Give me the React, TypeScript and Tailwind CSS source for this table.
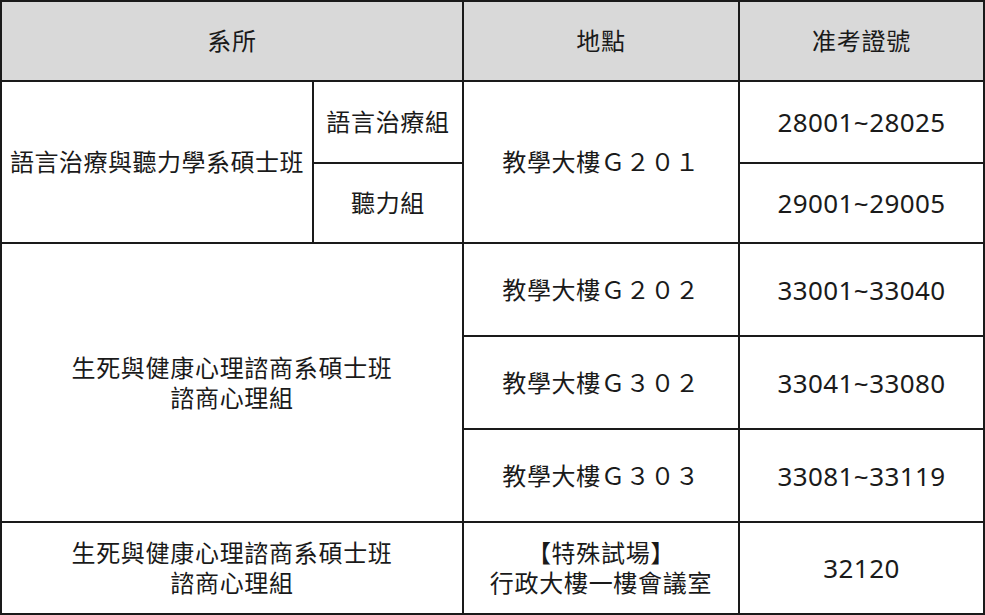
const cell = "border-2 border-[#1a1a1a] text-center align-middle";
const num = `${cell} text-[26px] tracking-[0.4px]`;

const rows = [
  { place: "教學大樓Ｇ２０２", no: "33001~33040" },
  { place: "教學大樓Ｇ３０２", no: "33041~33080" },
  { place: "教學大樓Ｇ３０３", no: "33081~33119" },
];

const App = () => {
  return (
    <div
      className="w-[985px] h-[615px] bg-[#8a8a8a] text-[#1a1a1a] text-[24px] leading-[30px] tracking-[0.7px]"
      style={{ fontFamily: '"Noto Sans", "Noto Sans CJK TC", sans-serif' }}
    >
      <table className="table-fixed border-collapse bg-white w-[983px] h-[613px]">
        <colgroup>
          <col className="w-[312px]" />
          <col className="w-[150px]" />
          <col className="w-[276px]" />
          <col className="w-[245px]" />
        </colgroup>
        <tbody>
          <tr className="h-[80px] bg-[#d9d9d9]">
            <td colSpan={2} className={cell}>系所</td>
            <td className={cell}>地點</td>
            <td className={cell}>准考證號</td>
          </tr>
          <tr className="h-[82px]">
            <td rowSpan={2} className={`${cell} whitespace-nowrap tracking-[0.5px]`}>語言治療與聽力學系碩士班</td>
            <td className={cell}>語言治療組</td>
            <td rowSpan={2} className={cell}>教學大樓Ｇ２０１</td>
            <td className={num}>28001~28025</td>
          </tr>
          <tr className="h-[80px]">
            <td className={cell}>聽力組</td>
            <td className={num}>29001~29005</td>
          </tr>
          {rows.map((r, i) => (
            <tr key={i} className="h-[93px]">
              {i === 0 && (
                <td rowSpan={3} colSpan={2} className={cell}>
                  生死與健康心理諮商系碩士班
                  <br />
                  諮商心理組
                </td>
              )}
              <td className={cell}>{r.place}</td>
              <td className={num}>{r.no}</td>
            </tr>
          ))}
          <tr className="h-[92px]">
            <td colSpan={2} className={cell}>
              生死與健康心理諮商系碩士班
              <br />
              諮商心理組
            </td>
            <td className={cell}>
              【特殊試場】
              <br />
              行政大樓一樓會議室
            </td>
            <td className={num}>32120</td>
          </tr>
        </tbody>
      </table>
    </div>
  );
};

export default App;
